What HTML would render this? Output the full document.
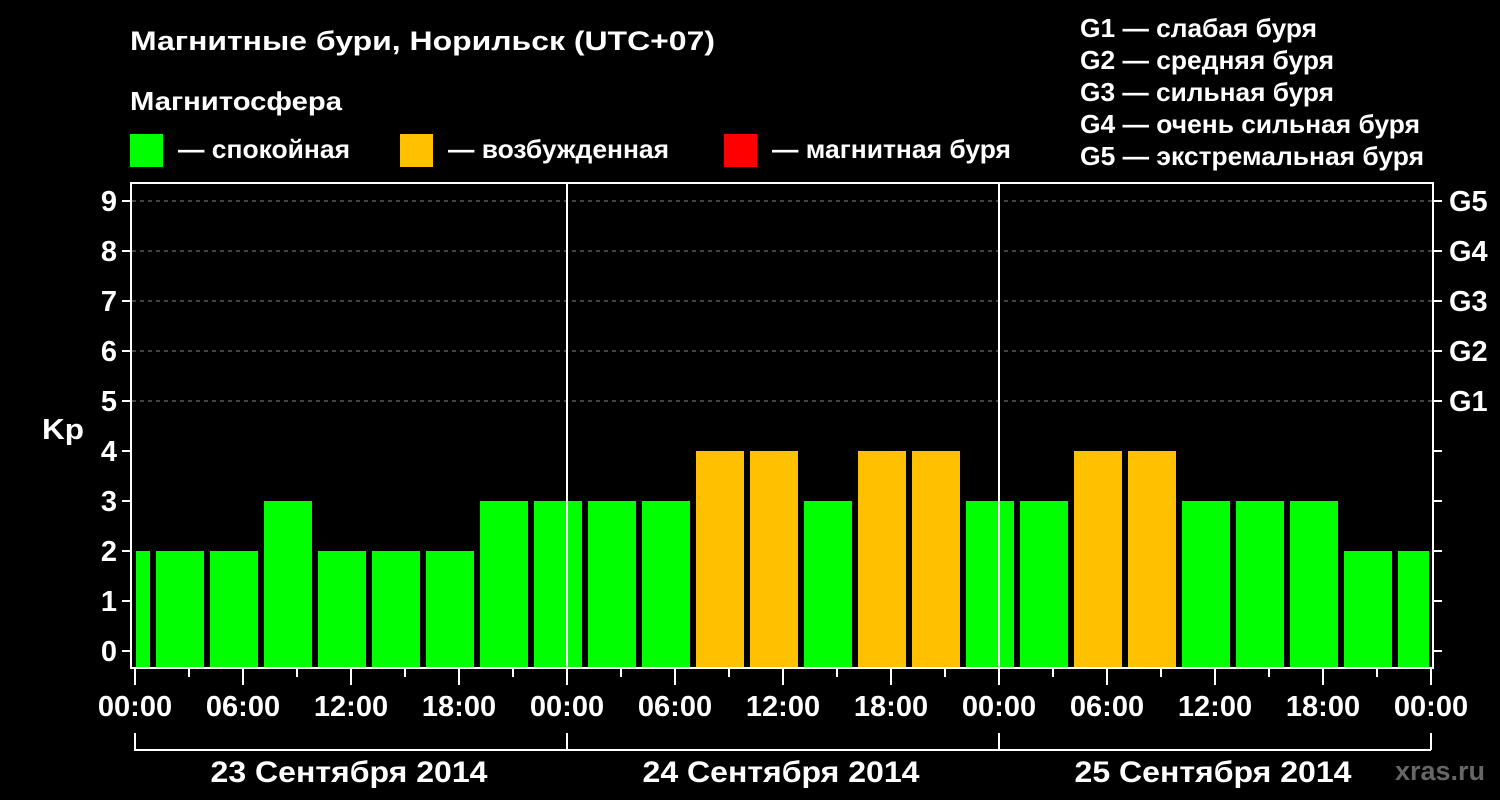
<!DOCTYPE html><html><head><meta charset="utf-8"><style>body{margin:0;background:#000}svg{display:block}</style></head><body>
<svg width="1500" height="800" xmlns="http://www.w3.org/2000/svg" font-family="Liberation Sans, sans-serif" font-weight="bold" fill="#fff">
<rect width="1500" height="800" fill="#000"/>
<text x="130" y="50" font-size="27" textLength="585" lengthAdjust="spacingAndGlyphs">Магнитные бури, Норильск (UTC+07)</text>
<text x="130" y="110" font-size="26" textLength="212" lengthAdjust="spacingAndGlyphs">Магнитосфера</text>
<rect x="130" y="134" width="33" height="33" fill="#00ff00"/><text x="178" y="158" font-size="26" textLength="172" lengthAdjust="spacingAndGlyphs">— спокойная</text>
<rect x="400" y="134" width="33" height="33" fill="#ffc000"/><text x="448" y="158" font-size="26" textLength="221" lengthAdjust="spacingAndGlyphs">— возбужденная</text>
<rect x="724" y="134" width="33" height="33" fill="#ff0000"/><text x="772" y="158" font-size="26" textLength="239" lengthAdjust="spacingAndGlyphs">— магнитная буря</text>
<g font-size="26"><text x="1080" y="37" textLength="237" lengthAdjust="spacingAndGlyphs">G1 — слабая буря</text><text x="1080" y="69" textLength="254" lengthAdjust="spacingAndGlyphs">G2 — средняя буря</text><text x="1080" y="101" textLength="254" lengthAdjust="spacingAndGlyphs">G3 — сильная буря</text><text x="1080" y="133" textLength="340" lengthAdjust="spacingAndGlyphs">G4 — очень сильная буря</text><text x="1080" y="165" textLength="344" lengthAdjust="spacingAndGlyphs">G5 — экстремальная буря</text></g>
<g stroke="#888" stroke-width="1" stroke-dasharray="4,4"><line x1="132" y1="201" x2="1432" y2="201"/><line x1="132" y1="251" x2="1432" y2="251"/><line x1="132" y1="301" x2="1432" y2="301"/><line x1="132" y1="351" x2="1432" y2="351"/><line x1="132" y1="401" x2="1432" y2="401"/></g>
<g fill="#00ff00">
<rect x="136" y="551" width="14" height="117"/>
<rect x="156" y="551" width="48" height="117"/><rect x="210" y="551" width="48" height="117"/><rect x="264" y="501" width="48" height="167"/><rect x="318" y="551" width="48" height="117"/><rect x="372" y="551" width="48" height="117"/><rect x="426" y="551" width="48" height="117"/><rect x="480" y="501" width="48" height="167"/><rect x="534" y="501" width="48" height="167"/><rect x="588" y="501" width="48" height="167"/><rect x="642" y="501" width="48" height="167"/>
<rect x="804" y="501" width="48" height="167"/><rect x="966" y="501" width="48" height="167"/><rect x="1020" y="501" width="48" height="167"/><rect x="1182" y="501" width="48" height="167"/><rect x="1236" y="501" width="48" height="167"/><rect x="1290" y="501" width="48" height="167"/><rect x="1344" y="551" width="48" height="117"/><rect x="1398" y="551" width="31" height="117"/>
</g>
<g fill="#ffc000"><rect x="696" y="451" width="48" height="217"/><rect x="750" y="451" width="48" height="217"/><rect x="858" y="451" width="48" height="217"/><rect x="912" y="451" width="48" height="217"/><rect x="1074" y="451" width="48" height="217"/><rect x="1128" y="451" width="48" height="217"/></g>
<g stroke="#fff" stroke-width="2" fill="none">
<rect x="131" y="183" width="1302" height="485"/>
<line x1="567" y1="183" x2="567" y2="668"/><line x1="999" y1="183" x2="999" y2="668"/>
<path d="M122 201h9M122 251h9M122 301h9M122 351h9M122 401h9M122 451h9M122 501h9M122 551h9M122 601h9M122 651h9"/>
<path d="M1433 201h9M1433 251h9M1433 301h9M1433 351h9M1433 401h9M1433 451h9M1433 501h9M1433 551h9M1433 601h9M1433 651h9"/>
<path d="M135 668v17M243 668v17M351 668v17M459 668v17M567 668v17M675 668v17M783 668v17M891 668v17M999 668v17M1107 668v17M1215 668v17M1323 668v17M1431 668v17"/>
<path d="M189 668v9M297 668v9M405 668v9M513 668v9M621 668v9M729 668v9M837 668v9M945 668v9M1053 668v9M1161 668v9M1269 668v9M1377 668v9"/>
<path d="M135 733v17H1431M567 733v17M999 733v17M1431 733v17"/>
</g>
<g font-size="29" text-anchor="end"><text x="117" y="211">9</text><text x="117" y="261">8</text><text x="117" y="311">7</text><text x="117" y="361">6</text><text x="117" y="411">5</text><text x="117" y="461">4</text><text x="117" y="511">3</text><text x="117" y="561">2</text><text x="117" y="611">1</text><text x="117" y="661">0</text></g>
<text x="42" y="439" font-size="29" textLength="42" lengthAdjust="spacingAndGlyphs">Kp</text>
<g font-size="29"><text x="1449" y="211">G5</text><text x="1449" y="261">G4</text><text x="1449" y="311">G3</text><text x="1449" y="361">G2</text><text x="1449" y="411">G1</text></g>
<g font-size="29" text-anchor="middle"><text x="135" y="716">00:00</text><text x="243" y="716">06:00</text><text x="351" y="716">12:00</text><text x="459" y="716">18:00</text><text x="567" y="716">00:00</text><text x="675" y="716">06:00</text><text x="783" y="716">12:00</text><text x="891" y="716">18:00</text><text x="999" y="716">00:00</text><text x="1107" y="716">06:00</text><text x="1215" y="716">12:00</text><text x="1323" y="716">18:00</text><text x="1431" y="716">00:00</text></g>
<g font-size="30" text-anchor="middle"><text x="349" y="782" textLength="277" lengthAdjust="spacingAndGlyphs">23 Сентября 2014</text><text x="781" y="782" textLength="277" lengthAdjust="spacingAndGlyphs">24 Сентября 2014</text><text x="1213" y="782" textLength="277" lengthAdjust="spacingAndGlyphs">25 Сентября 2014</text></g>
<text x="1485" y="780" font-size="27" text-anchor="end" fill="#666">xras.ru</text>
</svg>
</body></html>
